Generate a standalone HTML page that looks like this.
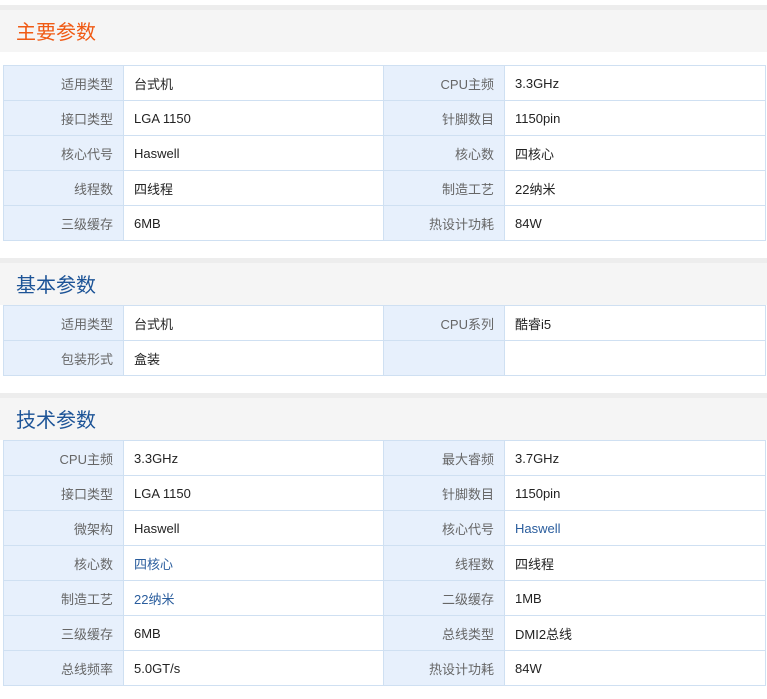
<!DOCTYPE html>
<html><head><meta charset="utf-8"><style>
body{margin:0;width:767px;height:699px;background:#fff;font-family:"Liberation Sans","Noto Sans CJK SC",sans-serif;position:relative;overflow:hidden}
.h{position:absolute;left:0;width:767px;height:47px;background:#f5f5f5;border-top:5px solid #ededed;box-sizing:border-box}
.h span{position:absolute;left:16px;top:6px;font-size:20px;color:#1d5497}
.h.o span{color:#f05a14}
table{position:absolute;left:3px;width:763px;border-collapse:collapse;table-layout:fixed;font-size:13px}
td{height:34px;border:1px solid #cfe0f2;padding:0 10px;color:#222;white-space:nowrap}
td.l{background:#e7f0fc;color:#666;text-align:right}
a{color:#2a5d9d;text-decoration:none}
</style></head><body>
<div class="h o" style="top:5px"><span>主要参数</span></div>
<table style="top:65px"><colgroup><col style="width:120px"><col style="width:260px"><col style="width:121px"><col></colgroup>
<tr><td class="l">适用类型</td><td>台式机</td><td class="l">CPU主频</td><td>3.3GHz</td></tr>
<tr><td class="l">接口类型</td><td>LGA 1150</td><td class="l">针脚数目</td><td>1150pin</td></tr>
<tr><td class="l">核心代号</td><td>Haswell</td><td class="l">核心数</td><td>四核心</td></tr>
<tr><td class="l">线程数</td><td>四线程</td><td class="l">制造工艺</td><td>22纳米</td></tr>
<tr><td class="l">三级缓存</td><td>6MB</td><td class="l">热设计功耗</td><td>84W</td></tr>
</table>
<div class="h" style="top:258px"><span>基本参数</span></div>
<table style="top:305px"><colgroup><col style="width:120px"><col style="width:260px"><col style="width:121px"><col></colgroup>
<tr><td class="l">适用类型</td><td>台式机</td><td class="l">CPU系列</td><td>酷睿i5</td></tr>
<tr><td class="l">包装形式</td><td>盒装</td><td class="l"></td><td></td></tr>
</table>
<div class="h" style="top:393px"><span>技术参数</span></div>
<table style="top:440px"><colgroup><col style="width:120px"><col style="width:260px"><col style="width:121px"><col></colgroup>
<tr><td class="l">CPU主频</td><td>3.3GHz</td><td class="l">最大睿频</td><td>3.7GHz</td></tr>
<tr><td class="l">接口类型</td><td>LGA 1150</td><td class="l">针脚数目</td><td>1150pin</td></tr>
<tr><td class="l">微架构</td><td>Haswell</td><td class="l">核心代号</td><td><a>Haswell</a></td></tr>
<tr><td class="l">核心数</td><td><a>四核心</a></td><td class="l">线程数</td><td>四线程</td></tr>
<tr><td class="l">制造工艺</td><td><a>22纳米</a></td><td class="l">二级缓存</td><td>1MB</td></tr>
<tr><td class="l">三级缓存</td><td>6MB</td><td class="l">总线类型</td><td>DMI2总线</td></tr>
<tr><td class="l">总线频率</td><td>5.0GT/s</td><td class="l">热设计功耗</td><td>84W</td></tr>
</table>
</body></html>
